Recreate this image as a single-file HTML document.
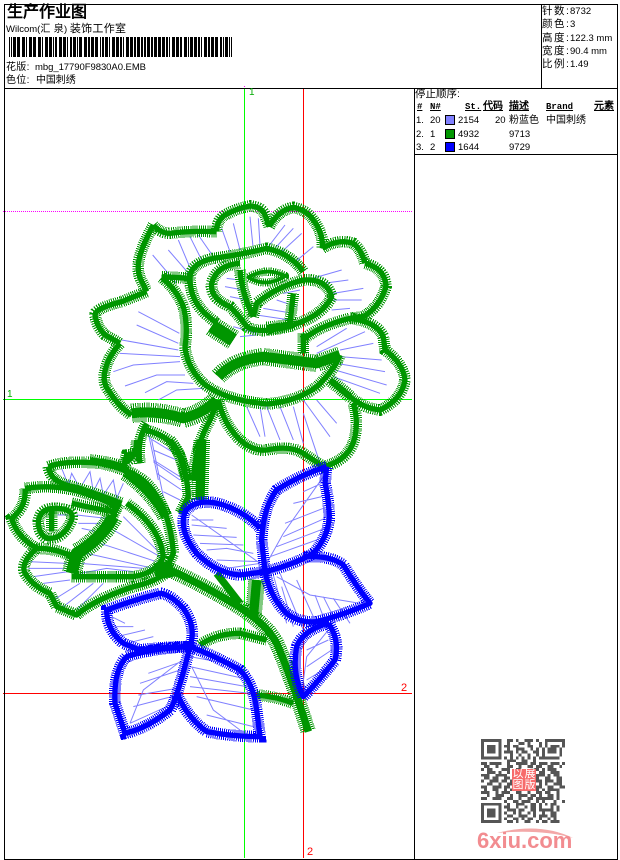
<!DOCTYPE html>
<html lang="zh"><head><meta charset="utf-8"><title>生产作业图</title>
<style>
html,body{margin:0;padding:0;background:#fff}
#p{position:relative;width:620px;height:860px;overflow:hidden;background:#fff;font:9.500px "Liberation Sans","WenQuanYi Zen Hei",sans-serif;color:#000}
.t{position:absolute;white-space:nowrap;line-height:13px}
.c{font-size:10px;letter-spacing:.3px}
.r{font-size:10.500px;letter-spacing:1.500px}
.l{position:absolute;background:#000}
.b{font-family:"Liberation Mono","WenQuanYi Zen Hei",monospace;font-weight:bold;text-decoration:underline;font-size:9px}
.b.z{font-size:10px}
.s{position:absolute;left:445px;width:8px;height:8px;border:1px solid #000}
svg{position:absolute;left:0;top:0}
.sat path{fill:none;stroke-linejoin:round}
.core{stroke-width:16}
.teeth{stroke-width:35;stroke-dasharray:3 3.300}
.thin{fill:none;stroke:#8080ff;stroke-width:3}
</style></head><body><div id="p">
<svg width="620" height="860" viewBox="0 0 620 860">
<defs>
<path id="a" d="M190 75Q160 130 149 170Q138 210 154 242L170 275M170 275L95 305Q15 325 15 345Q20 380 45 405L90 430M90 430Q55 470 47 505Q35 545 55 570Q85 620 125 645M190 75Q210 100 240 100Q300 92 380 95M380 95Q380 60 405 45Q440 25 480 18Q515 20 525 45L538 80M538 80Q565 30 610 22Q650 30 670 60Q700 100 697 145M697 145Q745 115 790 130Q815 150 825 190M825 190Q885 205 888 260Q870 320 820 350L780 355M640 420Q680 380 780 355Q860 365 880 410L885 450Q940 490 945 540Q935 600 870 630Q820 625 780 590L720 540M215 232Q260 270 280 320Q295 380 285 440Q290 500 340 550Q400 600 530 612Q620 605 680 560Q730 515 750 465M385 600Q400 670 450 720Q490 755 530 750Q600 735 640 760L700 800Q780 780 795 710Q805 660 790 610M215 230L300 235Q300 190 370 175Q450 165 530 145Q600 160 640 215M300 235Q300 300 350 345L380 370M450 190Q380 195 365 250Q360 295 420 320Q450 350 470 380Q510 405 610 375Q700 345 725 290Q710 235 640 240Q560 260 500 310L490 350M450 210Q455 280 490 350M610 280L600 370M640 400L640 460M150 790Q140 720 170 670M310 840Q315 740 360 660L385 600M165 690Q250 710 270 770L290 840M0 780Q60 785 100 800L110 765L140 760"/>
<path id="c" d="M145 80Q200 60 300 70Q400 90 440 130Q510 200 520 340L500 385M145 80Q150 120 200 135Q290 160 365 190M75 145Q180 130 270 165Q340 190 350 205L330 245M75 145Q80 200 35 235Q50 290 110 325M110 325Q60 370 75 400Q100 440 150 460L170 500L230 525Q280 480 400 440Q470 425 510 390M115 245Q120 205 165 205Q225 205 215 240Q190 300 140 295Q115 280 115 245ZM155 205L155 275M215 190Q280 205 340 215L360 190M110 325Q170 325 215 350M215 410Q300 410 400 410Q470 400 490 350Q480 260 380 190M370 70Q410 55 410 0M510 0Q560 60 565 170L540 220M600 615Q650 580 720 580L800 600M770 765Q830 770 880 790"/>
<path id="d" d="M780 265Q740 220 670 195Q590 170 555 215Q535 270 590 340Q650 400 720 405L795 395M980 80Q900 105 830 150Q790 200 785 300L795 395Q880 375 940 340Q985 290 988 230Q985 170 975 130L980 80M795 395Q810 470 860 520Q900 550 950 545Q1030 525 1110 490Q1070 440 1030 375Q990 345 910 350M985 550Q910 570 890 620Q875 700 910 770Q950 730 1005 660Q1020 600 985 550M570 620Q590 560 550 505Q510 462 480 460Q400 480 320 510Q320 570 370 610L420 630Q500 620 570 620M570 620Q450 625 380 650Q340 690 345 790L375 880Q440 865 510 810Q530 780 570 620M570 620Q650 650 720 690Q760 730 770 810L780 890Q700 890 620 875Q560 830 530 760"/>
</defs>
<path d="M244.500 88V858" stroke="#0f0" stroke-width="1" shape-rendering="crispEdges"/>
<path d="M303.500 88V858M3 693.500H412" stroke="#f00" stroke-width="1" shape-rendering="crispEdges"/>
<path d="M3 399.500H412" stroke="#0f0" stroke-width="1" shape-rendering="crispEdges"/>
<path d="M3 211.500H412" stroke="#f0f" stroke-width="1" stroke-dasharray="1 1" shape-rendering="crispEdges"/>
<rect x="244" y="86" width="1" height="1" fill="#f0f"/>
<g transform="translate(90 200) scale(.33333)">
<path class="thin" d="M145 335L268 400M140 375L265 430M95 420L265 450M90 460L270 470M70 515L130 495L270 485M105 558L200 525L285 525M165 578L230 545L310 550M205 600L260 570L340 565M188 165L260 250M235 150L300 225M265 120L305 215M300 110L340 190M325 105L370 170M395 85L420 155M430 70L450 150M480 50L490 150M505 55L510 135M585 75L535 140M610 85L550 150M635 100L570 160M670 140L610 190M755 210L650 240M775 240L700 250M820 265L730 280M815 300L730 300M780 325L725 330M770 385L680 440M825 395L680 460M850 430L750 450M875 480L750 470M885 515L740 490M890 555L735 510M870 580L730 530M470 620L510 710M510 620L525 710M530 620L570 720M570 620L610 720M610 620L640 730M640 600L720 710M680 600L740 670M640 640L690 790M500 345L600 360M520 325L610 340M560 300L620 320M580 280L630 270M410 235L450 240M405 260L460 270M420 290L470 300M430 380L500 400M450 410L500 405M175 700L205 840M180 715L270 770M190 780L270 830"/>
<g class="sat">
<use href="#a" class="core" fill="none" stroke="#009600" stroke-linejoin="round"/>
<use href="#a" class="teeth" fill="none" stroke="#009600" shape-rendering="crispEdges"/>
<path stroke="#009600" style="stroke-width:11" d="M475 232Q530 200 585 228Q530 265 475 232Z"/>
<path stroke="#009600" style="stroke-width:25;stroke-dasharray:3 3.300" shape-rendering="crispEdges" d="M475 232Q530 200 585 228Q530 265 475 232Z"/>
<path stroke="#009600" style="stroke-width:30" d="M385 530Q430 480 520 470Q600 480 680 490L750 465"/>
<path stroke="#009600" class="teeth" style="stroke-width:52" shape-rendering="crispEdges" d="M385 530Q430 480 520 470Q600 480 680 490L750 465"/>
<path stroke="#009600" style="stroke-width:30" d="M125 640Q200 630 280 655Q340 640 380 600"/>
<path stroke="#009600" class="teeth" style="stroke-width:58" shape-rendering="crispEdges" d="M125 640Q200 630 280 655Q340 640 380 600"/>
<path stroke="#009600" style="stroke-width:40" d="M365 378L430 420"/>
<path stroke="#009600" class="teeth" style="stroke-width:62" shape-rendering="crispEdges" d="M365 378L430 420"/>
<path stroke="#009600" style="stroke-width:20" d="M530 385L610 375M720 540L780 590"/>
<path stroke="#009600" class="teeth" style="stroke-width:40" shape-rendering="crispEdges" d="M530 385L610 375M720 540L780 590"/>
</g>
</g>
<g transform="translate(0 440) scale(.33333)">
<path class="thin" d="M185 85L205 135L215 100L240 145L270 95L280 155L300 115L310 165L340 120L350 175L370 130M230 225L320 235M235 250L300 250M245 265L290 275M160 225L205 225M370 230L480 340M340 270L480 350M300 310L470 365M260 340L460 385M240 370L430 385M240 400L320 385L400 395M85 365L200 370M85 385L205 385M100 410L205 395M130 430L210 420M160 480L240 430M190 500L280 430M230 510L310 430M455 0L490 170M460 30L530 60M460 65L540 120M470 100L545 150M490 155L540 180M575 225L780 370M575 240L640 240M575 255L680 265M580 285L710 292M600 310L730 315M620 330L680 325L760 340M650 360L780 365M680 385L780 370M970 110L850 280L800 370M965 130L910 155M965 170L880 190M970 205L855 250M975 235L850 290M975 265L830 320M950 300L810 350M820 405L860 550M840 400L910 570M830 410L930 465L1080 490M890 420L940 530M945 465L970 530M970 470L1000 530M1000 475L1050 550M845 440L880 560M985 570L920 650L905 760M985 600L920 630M995 630L920 680M985 680L920 720M335 530L375 550M345 560L400 560M350 590L435 570M380 610L460 590M545 665L445 700M540 690L420 730M530 745L415 765M515 770L400 800M500 800L390 850M540 665L430 750L390 850M570 650L730 680M570 680L730 715M570 710L740 740M570 740L750 760M590 770L760 810M620 825L760 860M575 680L640 810L720 870"/>
<g class="sat">
<use href="#c" class="core" fill="none" stroke="#009600" stroke-linejoin="round"/>
<use href="#c" class="teeth" fill="none" stroke="#009600" shape-rendering="crispEdges"/>
<path stroke="#009600" style="stroke-width:22" d="M500 385Q600 430 700 490Q800 550 830 610Q870 700 925 875M650 400L720 490"/>
<path stroke="#009600" style="stroke-width:46;stroke-dasharray:3 3.300" shape-rendering="crispEdges" d="M500 385Q600 430 700 490Q800 550 830 610Q870 700 925 875"/>
<path stroke="#009600" style="stroke-width:28" d="M605 0L600 180M770 420L760 530"/>
<path stroke="#009600" style="stroke-width:50;stroke-dasharray:3 3" shape-rendering="crispEdges" d="M605 0L600 180M770 420L760 530"/>
<path stroke="#009600" style="stroke-width:36" d="M340 230Q300 300 230 340L215 400"/>
<path stroke="#009600" style="stroke-width:60;stroke-dasharray:3 3.300" shape-rendering="crispEdges" d="M340 230Q300 300 230 340L215 400"/>
<path stroke="#009600" style="stroke-width:22" d="M375 100Q450 150 495 230"/>
<path stroke="#009600" style="stroke-width:46;stroke-dasharray:3 3" shape-rendering="crispEdges" d="M375 100Q450 150 495 230"/>
<path stroke="#009600" style="stroke-width:50" d="M465 395L520 385"/>
<use href="#d" class="core" fill="none" stroke="#00f" stroke-linejoin="round"/>
<use href="#d" class="teeth" fill="none" stroke="#00f" shape-rendering="crispEdges"/>
</g>
</g>
<path d="M9 47H233" stroke="#000" stroke-width="20" shape-rendering="crispEdges" stroke-dasharray="1 1 1 1 3 1 3 2 3 1 1 2 3 1 3 2 3 1 1 2 3 1 3 1 1 1 2 2 3 1 3 1 1 2 2 1 3 1 1 1 3 2 3 1 2 1 3 1 3 2 1 1 2 1 3 1 1 2 3 1 3 1 2 1 1 2 3 1 3 1 2 1 3 1 2 1 2 1 3 1 2 1 3 1 3 1 3 1 2 1 1 2 3 1 3 1 2 2 3 1 1 1 3 1 3 1 2 1 1 2 3 1 2 1 3 1 3 2 2 1 1 1 3"/>
<g transform="translate(481 739) scale(2.900)">
<path fill="none" stroke="#555" stroke-width="1" shape-rendering="crispEdges" d="M0 .5h7m2 0h2m1 0h1m2 0h3m1 0h1m2 0h7M0 1.500h1m5 0h1m2 0h1m3 0h2m1 0h1m3 0h1m1 0h1m5 0h1M0 2.500h1m1 0h3m1 0h1m1 0h2m1 0h2m3 0h2m2 0h1m1 0h1m1 0h3m1 0h1M0 3.500h1m1 0h3m1 0h1m2 0h1m2 0h3m2 0h1m1 0h1m1 0h1m1 0h3m1 0h1M0 4.500h1m1 0h3m1 0h1m1 0h3m1 0h1m1 0h2m2 0h2m1 0h1m1 0h3m1 0h1M0 5.500h1m5 0h1m3 0h1m2 0h1m2 0h1m2 0h1m1 0h1m5 0h1M0 6.500h7m1 0h1m1 0h1m1 0h1m1 0h1m1 0h1m1 0h1m1 0h7M9 7.500h3m2 0h2m2 0h1M0 8.500h2m1 0h4m2 0h1m2 0h4m1 0h2m1 0h3m1 0h3m1 0h1M1 9.500h2m2 0h1m3 0h2m2 0h1m2 0h2m1 0h2m2 0h2m2 0h1M0 10.500h1m1 0h2m3 0h3m2 0h2m3 0h3m1 0h1m1 0h3M2 11.500h3m1 0h1m2 0h1m2 0h3m2 0h1m2 0h2m2 0h3M0 12.500h3m2 0h4m2 0h1m7 0h3m1 0h1m1 0h2M1 13.500h2m1 0h2m2 0h2m9 0h1m2 0h2m2 0h2M0 14.500h1m2 0h3m1 0h2m1 0h1m8 0h2m1 0h3m1 0h2M2 15.500h2m2 0h1m2 0h2m9 0h1m1 0h1m2 0h3M0 16.500h2m2 0h3m1 0h2m2 0h1m6 0h2m2 0h2m2 0h2M1 17.500h1m2 0h2m2 0h1m1 0h3m1 0h3m1 0h2m1 0h1m1 0h4M0 18.500h3m2 0h1m1 0h3m2 0h2m2 0h1m2 0h2m1 0h2m2 0h1M2 19.500h1m2 0h3m2 0h1m2 0h3m1 0h2m1 0h1m2 0h2m1 0h1M0 20.500h2m2 0h3m2 0h2m2 0h1m2 0h2m1 0h6m1 0h1M8 21.500h1m2 0h2m1 0h3m2 0h1m1 0h1m3 0h1m2 0h1M0 22.500h7m2 0h1m2 0h3m2 0h2m1 0h1m1 0h1m1 0h2M0 23.500h1m5 0h1m1 0h2m2 0h1m2 0h1m1 0h2m1 0h1m3 0h1m1 0h1M0 24.500h1m1 0h3m1 0h1m2 0h3m1 0h2m2 0h2m1 0h5m1 0h1M0 25.500h1m1 0h3m1 0h1m1 0h1m2 0h1m1 0h1m2 0h1m1 0h1m2 0h1m2 0h2M0 26.500h1m1 0h3m1 0h1m2 0h2m2 0h3m2 0h1m1 0h3m1 0h2M0 27.500h1m5 0h1m1 0h1m2 0h2m1 0h1m1 0h2m2 0h1m2 0h1m1 0h1M0 28.500h7m2 0h2m1 0h1m2 0h2m2 0h1m1 0h2m1 0h3"/>
</g>
<path d="M497 833Q540 822 573 838Q540 829 497 833Z" fill="#f3a8a8"/>
</svg>

<div class="l" style="left:4px;top:4px;width:613px;height:1px"></div>
<div class="l" style="left:4px;top:88px;width:613px;height:1px"></div>
<div class="l" style="left:4px;top:859px;width:613px;height:1px"></div>
<div class="l" style="left:4px;top:4px;width:1px;height:856px"></div>
<div class="l" style="left:617px;top:4px;width:1px;height:856px"></div>
<div class="l" style="left:541px;top:4px;width:1px;height:84px"></div>
<div class="l" style="left:414px;top:88px;width:1px;height:771px"></div>
<div class="l" style="left:414px;top:154px;width:203px;height:1px"></div>

<div class="t" style="left:7px;top:4px;font-size:16px;line-height:18px;font-weight:bold">生产作业图</div>
<div class="t" style="left:6px;top:23px">Wilcom(<span class="c">汇 泉</span>) <span class="c" style="font-size:11px">装饰工作室</span></div>
<div class="t" style="left:6px;top:61px"><span class="c">花版:</span></div><div class="t" style="left:35px;top:61px;letter-spacing:-.05px">mbg_17790F9830A0.EMB</div>
<div class="t" style="left:6px;top:74px"><span class="c">色位:</span></div><div class="t" style="left:36px;top:74px"><span class="c" style="letter-spacing:-.1px">中国刺绣</span></div>

<div class="t r" style="left:542px;top:5px">针数:</div><div class="t" style="left:570px;top:5px">8732</div>
<div class="t r" style="left:542px;top:18px">颜色:</div><div class="t" style="left:570px;top:18px">3</div>
<div class="t r" style="left:542px;top:32px">高度:</div><div class="t" style="left:570px;top:32px">122.3 mm</div>
<div class="t r" style="left:542px;top:45px">宽度:</div><div class="t" style="left:570px;top:45px">90.4 mm</div>
<div class="t r" style="left:542px;top:58px">比例:</div><div class="t" style="left:570px;top:58px">1.49</div>

<div class="t" style="left:415px;top:88px;font-size:10.500px">停止顺序:</div>
<div class="t b" style="left:417px;top:101px">#</div>
<div class="t b" style="left:430px;top:101px">N#</div>
<div class="t b" style="left:465px;top:101px">St.</div>
<div class="t b z" style="left:483px;top:101px">代码</div>
<div class="t b z" style="left:509px;top:101px">描述</div>
<div class="t b" style="left:546px;top:101px">Brand</div>
<div class="t b z" style="left:594px;top:101px">元素</div>

<div class="t" style="left:416px;top:114px">1.</div><div class="t" style="left:430px;top:114px">20</div>
<div class="s" style="top:115px;background:#8080ff"></div>
<div class="t" style="left:458px;top:114px">2154</div><div class="t" style="left:495px;top:114px">20</div><div class="t" style="left:509px;top:114px;font-size:10px">粉蓝色</div><div class="t" style="left:546px;top:114px;font-size:10px">中国刺绣</div>
<div class="t" style="left:416px;top:128px">2.</div><div class="t" style="left:430px;top:128px">1</div>
<div class="s" style="top:129px;background:#009600"></div>
<div class="t" style="left:458px;top:128px">4932</div><div class="t" style="left:509px;top:128px">9713</div>
<div class="t" style="left:416px;top:141px">3.</div><div class="t" style="left:430px;top:141px">2</div>
<div class="s" style="top:142px;background:#00f"></div>
<div class="t" style="left:458px;top:141px">1644</div><div class="t" style="left:509px;top:141px">9729</div>

<div class="t" style="left:249px;top:86px;color:#0a0;font-size:10px">1</div>
<div class="t" style="left:7px;top:388px;color:#0a0;font-size:10px">1</div>
<div class="t" style="left:401px;top:682px;color:#f00;font-size:11px">2</div>
<div class="t" style="left:307px;top:846px;color:#f00;font-size:11px">2</div>

<div style="position:absolute;left:512px;top:769px;width:24px;height:22px;background:#f76b6b;color:#fff;font-size:11px;line-height:11px;text-align:center;display:grid;grid-template-columns:1fr 1fr">
<span>以</span><span>展</span><span>图</span><span>版</span></div>
<div class="t" style="left:477px;top:828px;font-size:22px;line-height:26px;font-weight:bold;color:#f28c90">6xiu.com</div>
</div></body></html>
